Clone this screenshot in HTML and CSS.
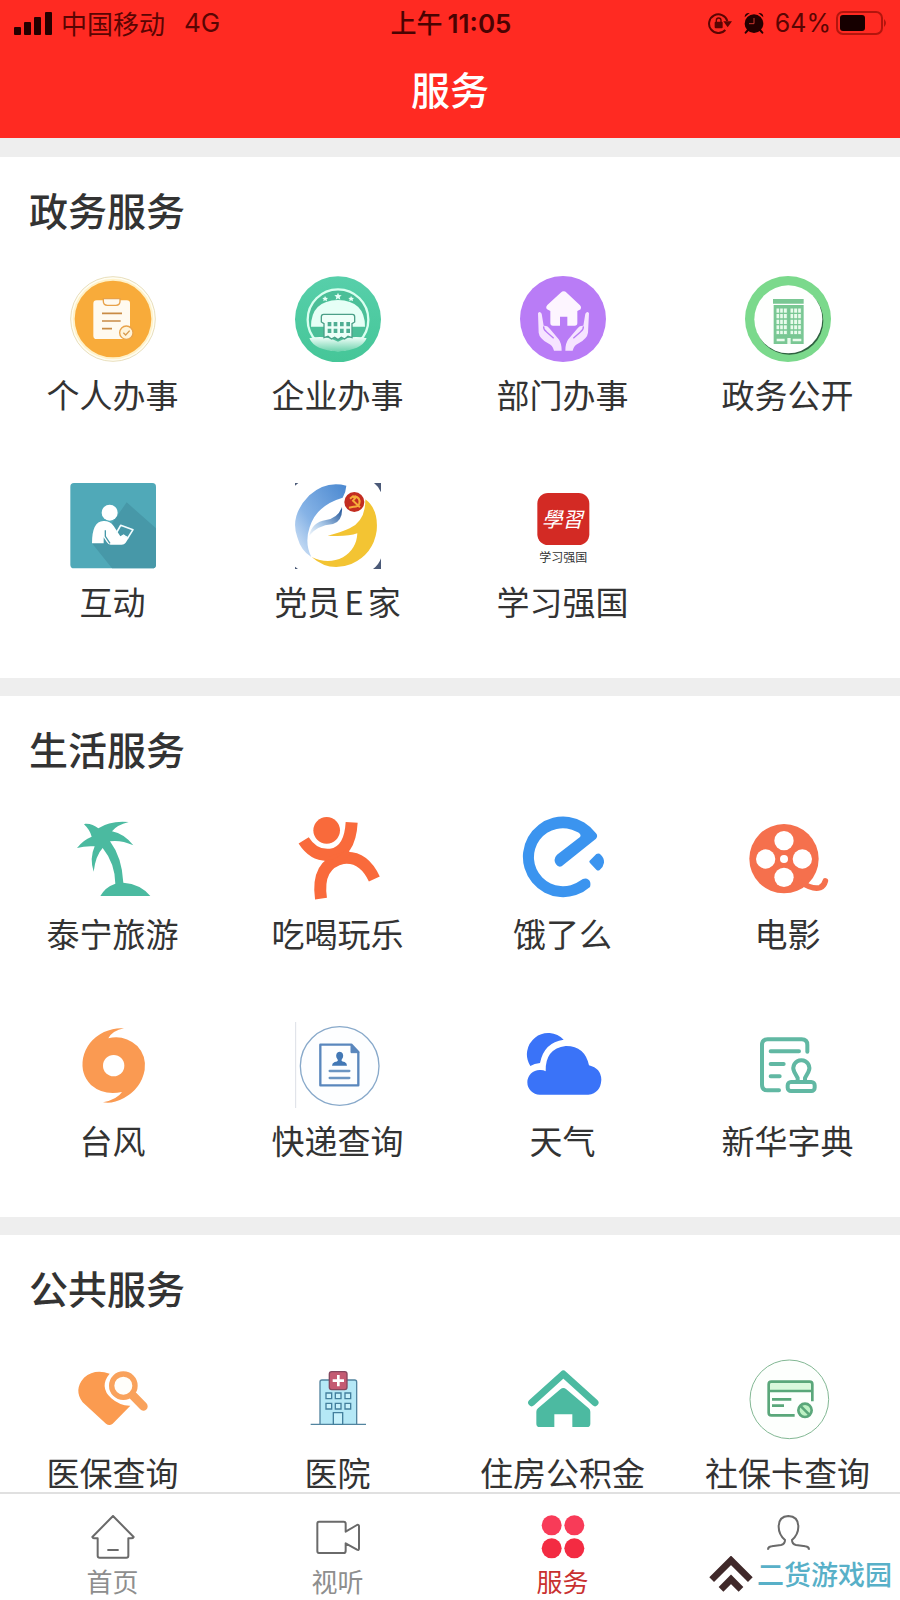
FILE: index.html
```html
<!DOCTYPE html>
<html lang="zh-CN">
<head>
<meta charset="UTF-8">
<meta name="viewport" content="width=device-width, initial-scale=1.0">
<title>服务</title>
<link rel="stylesheet" href="styles.css">
</head>
<body>

<header class="header">
    <div class="status-bar">
        <div class="status-left">
            <svg class="signal" viewBox="0 0 38 24" aria-hidden="true">
                <rect x="0" y="16" width="7" height="8" rx="1"/>
                <rect x="10" y="11" width="7" height="13" rx="1"/>
                <rect x="20" y="6" width="7" height="18" rx="1"/>
                <rect x="31" y="1" width="7" height="23" rx="1"/>
            </svg>
            <span>中国移动</span>
            <span class="network">4G</span>
        </div>
        <div class="status-time">上午<span class="clock">11:05</span></div>
        <div class="status-right">
            <svg class="lock" viewBox="775 35 72 66" aria-hidden="true">
                <path d="M827 89A28 28 0 1 1 833 62" fill="none" stroke="#5a0503" stroke-width="6"/>
                <path d="M821 63h26l-13 18z" fill="#5a0503"/>
                <rect x="795" y="64" width="24" height="20" rx="3" fill="#5a0503"/>
                <path d="M800 66v-6a7 7 0 0 1 14 0v6" fill="none" stroke="#5a0503" stroke-width="4"/>
            </svg>
            <svg class="alarm" viewBox="884 35 60 64" aria-hidden="true">
                <circle cx="914" cy="69" r="28" fill="#240000"/>
                <path d="M886 50q0-14 15-13zM942 50q0-14-15-13z" fill="#240000"/>
                <path d="M896 88l-7 8M932 88l7 8" stroke="#240000" stroke-width="6" stroke-linecap="round"/>
                <path d="M914 52v17h-15" fill="none" stroke="#c9372e" stroke-width="3"/>
            </svg>
            <span class="percent">64%</span>
            <svg class="battery" viewBox="0 0 52 24" aria-hidden="true">
                <rect x="1" y="1" width="45" height="22" rx="6" fill="none" stroke="#b3150d" stroke-width="2"/>
                <rect x="4" y="4" width="25" height="16" rx="3" fill="#160000"/>
                <path d="M48 8q4 4 0 8z" fill="#b3150d"/>
            </svg>
        </div>
    </div>
    <h1 class="page-title">服务</h1>
</header>

<main class="content">

    <section class="section">
        <h2 class="section-title">政务服务</h2>
        <div class="grid">
            <a class="item" href="#">
                <svg class="icon" viewBox="208 318 258 258" aria-hidden="true">
                    <circle cx="337" cy="447" r="127" fill="#fffdf2" stroke="#e9dfbc" stroke-width="3"/>
                    <circle cx="337" cy="447" r="121" fill="#fff2c9"/>
                    <circle cx="337" cy="447" r="115" fill="#f8ab3a"/>
                    <rect x="278" y="391" width="110" height="116" rx="10" fill="#fffaf0"/>
                    <path d="M308 386h50v8q0 12-12 12h-26q-12 0-12-12z" fill="#fffaf0" stroke="#e8a24a" stroke-width="4"/>
                    <path d="M304 430h60M304 453h56M304 476h30" stroke="#c98b45" stroke-width="5"/>
                    <circle cx="377" cy="488" r="20" fill="#fff3d8" stroke="#e8a24a" stroke-width="4"/>
                    <path d="M368 488l7 7 12-13" fill="none" stroke="#d79a4e" stroke-width="4"/>
                </svg>
                <span class="label">个人办事</span>
            </a>
            <a class="item" href="#">
                <svg class="icon" viewBox="883 318 258 258" aria-hidden="true">
                    <defs>
                        <linearGradient id="hill" x1="0" y1="0" x2="0" y2="1">
                            <stop offset="0" stop-color="#f2fffa"/>
                            <stop offset="1" stop-color="#6fd3ae"/>
                        </linearGradient>
                        <linearGradient id="mint" x1="0" y1="0" x2="0" y2="1">
                            <stop offset="0" stop-color="#57cfaa"/>
                            <stop offset="1" stop-color="#45c698"/>
                        </linearGradient>
                    </defs>
                    <circle cx="1012" cy="448" r="129" fill="url(#mint)"/>
                    <circle cx="1012" cy="449" r="91" fill="#4bbf98" stroke="#d9fff0" stroke-width="7"/>
                    <path d="M931 470q0-78 81-80 81 2 81 80z" fill="#e6fff6"/>
                    <path d="M926 505q46-12 86 10 40-22 86-10-16 37-86 39-70-2-86-39z" fill="url(#hill)"/>
                    <path d="M962 440q0-7 7-7h86q7 0 7 7v16l-8 5v42l-12-4-10 8-10-5-10 7-10-7-10 5-10-8-12 4v-42l-8-5z" fill="#edfff8" stroke="#4b9f88" stroke-width="4"/>
                    <path d="M981 456h11v13h-11zM999 456h11v13h-11zM1018 456h11v13h-11zM1037 456h11v13h-11zM981 476h11v13h-11zM999 476h11v13h-11zM1018 476h11v13h-11zM1037 476h11v13h-11z" fill="#4fae93"/>
                    <path d="M1012 368l3 7 8 1-6 5 2 8-7-4-7 4 2-8-6-5 8-1zM973 378l3 5 6 1-4 4 1 6-6-3-5 3 1-6-4-4 6-1zM1051 378l3 5 6 1-4 4 1 6-6-3-5 3 1-6-4-4 6-1z" fill="#e6fff6"/>
                </svg>
                <span class="label">企业办事</span>
            </a>
            <a class="item" href="#">
                <svg class="icon" viewBox="208 78 258 258" aria-hidden="true">
                    <circle cx="337" cy="207" r="129" fill="#b97cf6"/>
                    <path d="M330 128q9-8 18 0l40 38q6 6 2 12l-10 5v36q0 8-8 8h-22v-27h-22v27h-21q-8 0-8-8v-36l-11-6q-4-6 2-12z" fill="#fdf5ff"/>
                    <path d="M262 190q5-8 11 1l6 36q12-1 19 10l26 31q9 12 9 34h-23q-4-16-18-22-26-15-28-32z" fill="#f6e4ff"/>
                    <path d="M415 190q-5-8-11 1l-6 36q-12-1-19 10l-26 31q-9 12-9 34h22q4-16 18-22 26-15 28-32z" fill="#f6e4ff"/>
                    <path d="M279 229q-1 10 8 16l22 20M398 229q1 10-8 16l-22 20" fill="none" stroke="#b97cf6" stroke-width="4"/>
                </svg>
                <span class="label">部门办事</span>
            </a>
            <a class="item" href="#">
                <svg class="icon" viewBox="883 78 258 258" aria-hidden="true">
                    <circle cx="1012" cy="207" r="129" fill="#7bd98c"/>
                    <circle cx="1016" cy="212" r="102" fill="#2f6140"/>
                    <circle cx="1013" cy="208" r="102" fill="#fefffe"/>
                    <path d="M967 147h92v14h-92zM969 165h90v117h-90z" fill="#79c793"/>
                    <path d="M976 174h34v16h-34zM1018 174h34v16h-34zM976 190h34v17h-34zM1018 190h34v17h-34zM976 207h34v17h-34zM1018 207h34v17h-34zM976 224h34v16h-34zM1018 224h34v16h-34zM976 240h34v14h-34zM1018 240h34v14h-34z" fill="#e9fbec" stroke="#79c793" stroke-width="3"/>
                    <path d="M987 174v80M998 174v80M1029 174v80M1041 174v80" stroke="#79c793" stroke-width="3"/>
                    <path d="M978 266h24v8h-24zM1026 266h26v8h-26zM1010 264h10v18h-10z" fill="#e9fbec"/>
                </svg>
                <span class="label">政务公开</span>
            </a>
            <a class="item" href="#">
                <svg class="icon" viewBox="90 68 258 258" aria-hidden="true">
                    <rect x="91" y="68" width="257" height="256" rx="11" fill="#50a9b8"/>
                    <path d="M260 126l88 78v109q0 11-11 11H216l-60-75 60-60z" fill="#4798a8"/>
                    <circle cx="209" cy="157" r="24" fill="#fff"/>
                    <path d="M156 249q0-66 34-67 20-1 31 15l20 31 10-6 15 11-9 14q-4 6-12 6h-33q-7 0-12-8l-9-14v18z" fill="#fff"/>
                    <path d="M196 210v18l14 21" fill="none" stroke="#4798a8" stroke-width="4"/>
                    <path d="M229 218l13-23 37 13-15 24-16-6" fill="none" stroke="#f3fdff" stroke-width="5" stroke-linejoin="round"/>
                </svg>
                <span class="label">互动</span>
            </a>
            <a class="item" href="#">
                <svg class="icon" viewBox="763 69 258 258" aria-hidden="true">
                    <defs>
                        <linearGradient id="sky" x1="1" y1="0" x2="0" y2="1">
                            <stop offset="0" stop-color="#4a88d0"/>
                            <stop offset="0.6" stop-color="#86b3e6"/>
                            <stop offset="1" stop-color="#dce9f8"/>
                        </linearGradient>
                        <linearGradient id="wing" x1="0" y1="1" x2="1" y2="0">
                            <stop offset="0" stop-color="#f2f7fc"/>
                            <stop offset="0.4" stop-color="#a9c8e8"/>
                            <stop offset="1" stop-color="#1d4f93"/>
                        </linearGradient>
                    </defs>
                    <path d="M1000 69h23v34q-5-20-23-34zM1023 288v39h-26q20-14 26-39zM763 69h10l-10 8zM763 320l9 7h-9z" fill="#4b5a78"/>
                    <path d="M917 77q-62-16-111 29-60 61-36 126 11 41 42 59-21-43-5-89 20-66 99-89 10-18 11-36z" fill="url(#sky)"/>
                    <path d="M805 228q9-42 51-48 36-6 48-39 3 42-27 51-50 5-72 36z" fill="url(#wing)"/>
                    <path d="M974 118q40 30 34 94-10 70-76 100-66 26-119-21 48 24 94 1 41-25 43-72-31 11-89 7 39-9 66-22 48-22 47-87z" fill="#f3c433"/>
                    <circle cx="941" cy="126" r="30" fill="#c32d20"/>
                    <path d="M941 108q19 5 15 22-4 11-18 10l-13 3M928 116l9-7 6 6-6 7 21 20" fill="none" stroke="#f6ac3a" stroke-width="6"/>
                </svg>
                <span class="label">党员<span class="latin">E</span>家</span>
            </a>
            <a class="item" href="#">
                <svg class="icon" viewBox="118 69 258 258" aria-hidden="true">
                    <rect x="170" y="99" width="156" height="156" rx="32" fill="#d32a24"/>
                    <text class="logo-script" x="183" y="201">學習</text>
                    <text class="logo-name" x="248" y="306">学习强国</text>
                </svg>
                <span class="label">学习强国</span>
            </a>
        </div>
    </section>

    <section class="section">
        <h2 class="section-title">生活服务</h2>
        <div class="grid">
            <a class="item" href="#">
                <svg class="icon" viewBox="88 75 258 258" aria-hidden="true">
                    <path d="M134 101q22-1 39 14 35-24 91-19-36 9-50 28 36 7 64 42-38-17-70-12 36 48 40 124 52 4 81 40H179q15-27 45-37-1-61-38-107-21 22-27 71-13-40 3-76-28-2-53 5 18-24 44-34-5-20-23-37z" fill="#4bbaa0"/>
                </svg>
                <span class="label">泰宁旅游</span>
            </a>
            <a class="item" href="#">
                <svg class="icon" viewBox="763 75 258 258" aria-hidden="true">
                    <g fill="none" stroke="#f96a3b" stroke-width="36">
                        <path d="M789 151Q820 200 870 194Q928 187 933 97"/>
                        <path d="M841 326Q826 222 908 204Q968 197 1001 267"/>
                    </g>
                    <path d="M850 210q40 5 68-35l12 15-20 22-42 14z" fill="#f96a3b"/>
                    <circle cx="858" cy="121" r="40" fill="#f96a3b"/>
                </svg>
                <span class="label">吃喝玩乐</span>
            </a>
            <a class="item" href="#">
                <svg class="icon" viewBox="118 75 258 258" aria-hidden="true">
                    <path d="M319 266q14 6 9 25A121 121 0 1 1 346 130q7 8 0 16L243 229q-10 4-17-6-10-16 3-29l69-53q6-9-10-16A87 87 0 1 0 298 272q12-9 21-6z" fill="#3b94ef"/>
                    <path d="M327 212l20-20q8-4 14 3 10 10 9 23-2 13-13 22-5 4-10-1l-19-20q-4-4-1-7z" fill="#3b94ef"/>
                </svg>
                <span class="label">饿了么</span>
            </a>
            <a class="item" href="#">
                <svg class="icon" viewBox="793 75 258 258" aria-hidden="true">
                    <circle cx="910" cy="206" r="104" fill="#f5704d"/>
                    <path d="M960 276q36 24 58 17 12-5 16-20" fill="none" stroke="#f5704d" stroke-width="17" stroke-linecap="round"/>
                    <g fill="#fff">
                        <circle cx="910" cy="152" r="29"/>
                        <circle cx="855" cy="207" r="29"/>
                        <circle cx="965" cy="207" r="29"/>
                        <circle cx="910" cy="262" r="29"/>
                        <circle cx="910" cy="207" r="12"/>
                    </g>
                </svg>
                <span class="label">电影</span>
            </a>
            <a class="item" href="#">
                <svg class="icon" viewBox="88 66 258 258" aria-hidden="true">
                    <path d="M250 85Q215 92 203 115Q250 103 290 138Q318 168 312 210Q302 265 250 294Q215 313 187 307Q230 298 244 276Q190 288 151 255Q119 223 127 175Q138 122 190 96Q222 82 250 85z" fill="#fa9a52"/>
                    <circle cx="219" cy="197" r="32" fill="#fff"/>
                </svg>
                <span class="label">台风</span>
            </a>
            <a class="item" href="#">
                <svg class="icon" viewBox="763 66 258 258" aria-hidden="true">
                    <path d="M765 66v258" stroke="#dcdfe6" stroke-width="3"/>
                    <circle cx="897" cy="198" r="118" fill="#fdfeff" stroke="#88a9ca" stroke-width="4"/>
                    <path d="M839 134h93l21 22v100h-114z" fill="none" stroke="#5a87bd" stroke-width="7" stroke-linejoin="round"/>
                    <path d="M931 132v26h24z" fill="#5a87bd" stroke="#5a87bd" stroke-width="3"/>
                    <path d="M897 155q13 2 10 17l-5 9q2 5 10 5 7 3 7 11h-45q0-8 8-11 9 0 10-5l-5-9q-3-15 10-17z" fill="#4378b5"/>
                    <path d="M867 213h59M867 234h59" stroke="#6b95c2" stroke-width="7" stroke-linecap="round"/>
                </svg>
                <span class="label">快递查询</span>
            </a>
            <a class="item" href="#">
                <svg class="icon" viewBox="118 66 258 258" aria-hidden="true">
                    <path d="M149 198A64 64 0 0 1 249 119Q190 127 178 189 161 190 149 198z" fill="#3a73f8"/>
                    <path d="M177 284A36 36 0 0 1 177 210q10-1 18 4-2-68 60-76 57-1 70 58 36 9 37 43-2 40-39 45z" fill="#3a73f8"/>
                </svg>
                <span class="label">天气</span>
            </a>
            <a class="item" href="#">
                <svg class="icon" viewBox="793 66 258 258" aria-hidden="true">
                    <g fill="none" stroke="#61b8a3" stroke-width="12" stroke-linecap="round" stroke-linejoin="round">
                        <path d="M980 155v-20q0-17-17-17H861q-17 0-17 17v119q0 17 17 17h34"/>
                        <path d="M870 154h85M870 192h39M870 229h27"/>
                        <rect x="921" y="246" width="81" height="27" rx="10"/>
                        <path d="M951 242v-8l-10-18a24 24 0 1 1 42 0l-10 18v8"/>
                    </g>
                </svg>
                <span class="label">新华字典</span>
            </a>
        </div>
    </section>

    <section class="section">
        <h2 class="section-title">公共服务</h2>
        <div class="grid">
            <a class="item" href="#">
                <svg class="icon" viewBox="208 39 258 258" aria-hidden="true">
                    <path d="M327 98q-45-16-77 12-32 36-4 74l70 64q10 8 20 0l53-54q-31 1-57-22-38-35-5-74z" fill="#fb9b50"/>
                    <circle cx="368" cy="134" r="35" fill="#fffefa" stroke="#f9a25c" stroke-width="16"/>
                    <path d="M398 165l30 31" stroke="#f9a25c" stroke-width="26" stroke-linecap="round"/>
                </svg>
                <span class="label">医保查询</span>
            </a>
            <a class="item" href="#">
                <svg class="icon" viewBox="883 39 258 258" aria-hidden="true">
                    <path d="M958 250V123q0-6 6-6h98q6 0 6 6v127" fill="#b5e8f6" stroke="#52849f" stroke-width="4"/>
                    <path d="M930 250h166" stroke="#52849f" stroke-width="4"/>
                    <path d="M976 156h17v17h-17zM1004 156h17v17h-17zM1033 156h17v17h-17zM976 187h17v17h-17zM1004 187h17v17h-17zM1033 187h17v17h-17zM998 215h28v35h-28z" fill="#c7f1fb" stroke="#437f9d" stroke-width="4"/>
                    <rect x="986" y="92" width="53" height="54" rx="7" fill="#c45a72" stroke="#85475e" stroke-width="4"/>
                    <path d="M1013 102v34M996 119h34" stroke="#fff" stroke-width="8"/>
                </svg>
                <span class="label">医院</span>
            </a>
            <a class="item" href="#">
                <svg class="icon" viewBox="208 39 258 258" aria-hidden="true">
                    <path d="M243 185l95-86 95 86" fill="none" stroke="#4cbaa1" stroke-width="21" stroke-linecap="round" stroke-linejoin="round"/>
                    <path d="M329 145q9-8 18 0l67 57q5 4 5 10v36q0 10-10 10h-44v-38h-54v38h-44q-10 0-10-10v-36q0-6 5-10z" fill="#4cbaa1"/>
                </svg>
                <span class="label">住房公积金</span>
            </a>
            <a class="item" href="#">
                <svg class="icon" viewBox="883 39 258 258" aria-hidden="true">
                    <circle cx="1016" cy="175" r="118" fill="#fdfffd" stroke="#83b894" stroke-width="3"/>
                    <path d="M958 122h122q6 0 6 6v23H953v-23q0-6 5-6z" fill="#d9f8dc"/>
                    <g fill="none" stroke="#5aa77a" stroke-width="8">
                        <path d="M1085 181v-51q0-8-8-8H962q-8 0-8 8v85q0 8 8 8h70M954 150h131M964 175h58M964 194h36"/>
                        <circle cx="1063" cy="208" r="20" fill="#bdf1c4"/>
                        <path d="M1051 196l24 24"/>
                    </g>
                </svg>
                <span class="label">社保卡查询</span>
            </a>
        </div>
    </section>

</main>

<nav class="tab-bar">
    <a class="tab" href="#">
        <svg class="tab-icon" viewBox="271 525 132 132" aria-hidden="true">
            <path d="M337 528l62 63q-2 4-7 4h-9v52q0 6-6 6h-80q-6 0-6-6v-52h-9q-5 0-7-4z" fill="none" stroke="#6a6a6a" stroke-width="6" stroke-linejoin="round"/>
            <path d="M320 630h34" stroke="#6a6a6a" stroke-width="6"/>
        </svg>
        <span>首页</span>
    </a>
    <a class="tab" href="#">
        <svg class="tab-icon" viewBox="946 525 132 132" aria-hidden="true">
            <path d="M955 545h74q6 0 6 6v24l34-20q6-2 6 4v66q0 7-6 4l-34-19v22q0 7-6 7h-74q-5 0-5-6v-82q0-6 5-6z" fill="none" stroke="#6a6a6a" stroke-width="6" stroke-linejoin="round"/>
        </svg>
        <span>视听</span>
    </a>
    <a class="tab active" href="#">
        <svg class="tab-icon" viewBox="273 525 132 132" aria-hidden="true">
            <circle cx="305" cy="556" r="30" fill="#f83b58"/>
            <circle cx="373" cy="556" r="30" fill="#f83b58"/>
            <circle cx="305" cy="625" r="30" fill="#f32b42"/>
            <circle cx="373" cy="625" r="30" fill="#f32b42"/>
        </svg>
        <span>服务</span>
    </a>
    <a class="tab" href="#" aria-label="我的">
        <svg class="tab-icon" viewBox="946 525 132 132" aria-hidden="true">
            <path d="M952 629q0-9 11-10l28-4q12-3 12-15-19-17-19-40 0-31 29-32 30 1 30 32 0 23-19 40 0 12 12 15l28 4q11 1 11 10" fill="none" stroke="#6a6a6a" stroke-width="6"/>
        </svg>
    </a>
    <div class="brand">
        <svg class="brand-logo" viewBox="780 648 130 108" aria-hidden="true">
            <path d="M787 719l58-58 58 58M815 748l30-30 30 30" fill="none" stroke="#40292a" stroke-width="20"/>
        </svg>
        <span>二货游戏园</span>
    </div>
</nav>

</body>
</html>
```

FILE: styles.css
```css
* {
    margin: 0;
    padding: 0;
    box-sizing: border-box;
}
body {
    display: flex;
    flex-direction: column;
    height: 100vh;
    background: #eee;
    color: #333;
    font-family: "Noto Sans CJK SC", sans-serif;
}
a {
    color: inherit;
    text-decoration: none;
}

/* Header */
.header {
    background: #ff2a22;
    padding-bottom: 20px;
}
.status-bar {
    display: grid;
    grid-template-columns: 1fr auto 1fr;
    align-items: center;
    height: 46px;
    padding: 0 12px 0 14px;
    font-size: 26px;
    line-height: 32px;
    color: #5a0503;
}
.status-left, .status-right {
    display: flex;
    align-items: center;
}
.status-left {
    gap: 9px;
}
.status-right {
    justify-content: flex-end;
}
.signal {
    width: 38px;
    height: 24px;
    fill: #240000;
}
.network, .clock, .percent {
    font-family: Inter, "Liberation Sans", sans-serif;
}
.network {
    margin-left: 10px;
}
.status-time {
    font-weight: 500;
    color: #4a0302;
}
.clock {
    margin-left: 5px;
    font-weight: 600;
}
.lock {
    width: 24px;
    height: 22px;
    margin-right: 12px;
}
.alarm {
    width: 20px;
    height: 22px;
    margin-right: 11px;
}
.percent {
    margin-right: 5px;
    font-size: 25px;
}
.battery {
    width: 52px;
    height: 24px;
}
.page-title {
    font-size: 39px;
    font-weight: 500;
    line-height: 72px;
    height: 72px;
    padding-top: 6px;
    text-align: center;
    color: #fff;
}

/* Service groups */
.content {
    flex: 1;
    min-height: 0;
    overflow-y: auto;
    scrollbar-width: none;
    padding-top: 19px;
}
.section {
    background: #fff;
    padding-bottom: 57px;
}
.section + .section {
    margin-top: 18px;
}
.section-title {
    padding: 24px 29px 39px;
    font-size: 39px;
    font-weight: 500;
    line-height: 56px;
}
.grid {
    display: grid;
    grid-template-columns: repeat(4, 1fr);
    row-gap: 69px;
}
.item {
    display: flex;
    flex-direction: column;
    align-items: center;
    gap: 12px;
}
.icon {
    width: 86px;
    height: 86px;
}
.label {
    font-size: 33px;
    line-height: 40px;
    white-space: nowrap;
}
.latin {
    margin: 0 4px;
}
.logo-script {
    font-size: 62px;
    font-style: italic;
    fill: #fff;
}
.logo-name {
    font-size: 36px;
    text-anchor: middle;
    fill: #333;
}

/* Bottom tabs */
.tab-bar {
    position: relative;
    display: grid;
    grid-template-columns: repeat(4, 1fr);
    height: 108px;
    padding-top: 21px;
    background: #fff;
    border-top: 2px solid #e0e0e0;
}
.tab {
    display: flex;
    flex-direction: column;
    align-items: center;
    gap: 6px;
    font-size: 26px;
    line-height: 32px;
    color: #8e8e8e;
}
.tab.active {
    color: #c9302f;
}
.tab-icon {
    width: 44px;
    height: 44px;
}
.brand {
    position: absolute;
    right: 8px;
    bottom: 8px;
    display: flex;
    align-items: center;
    gap: 4px;
    font-size: 27px;
    font-weight: 500;
    line-height: 36px;
    color: #58b0c8;
}
.brand-logo {
    width: 44px;
    height: 36px;
}
```
